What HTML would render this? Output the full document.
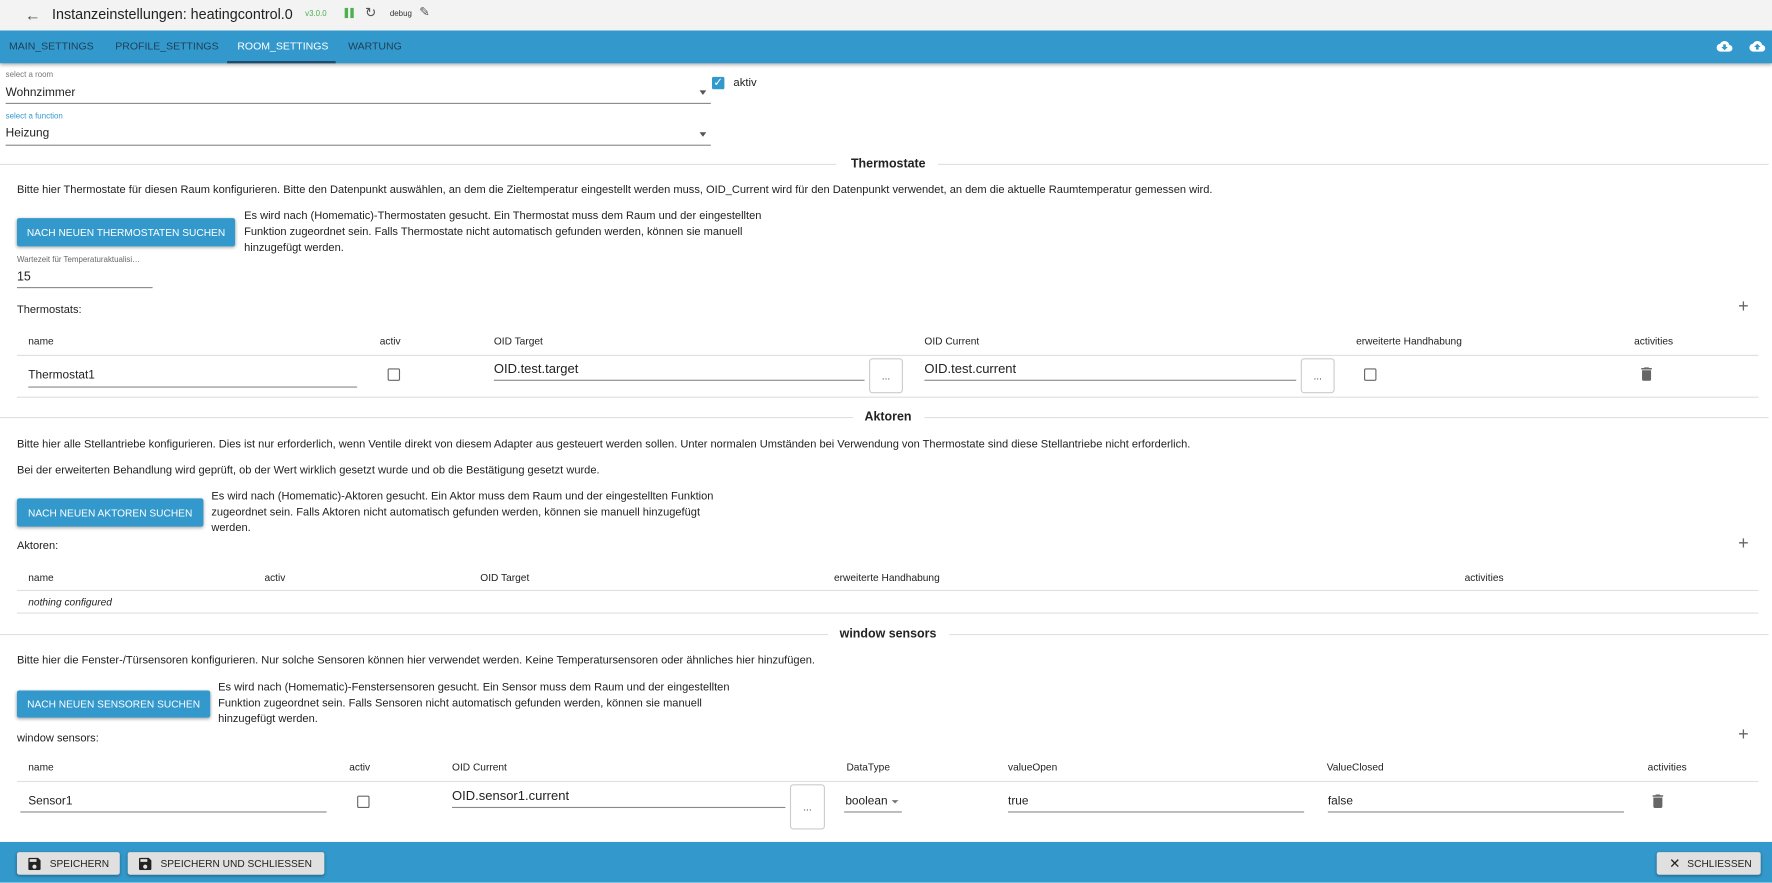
<!DOCTYPE html>
<html><head><meta charset="utf-8"><style>
html,body{margin:0;padding:0;width:1772px;height:883px;overflow:hidden;background:#fff}
#w{position:absolute;left:0;top:0;width:1568px;height:781.4px;transform:scale(1.13010);transform-origin:0 0;font-family:"Liberation Sans",sans-serif;color:#222;overflow:hidden}
.a{position:absolute;white-space:nowrap;line-height:14px;font-size:11px}
.l{position:absolute;height:1px;background:#e0e0e0}
.u{position:absolute;height:1px;background:#8a8a8a}
.btn{position:absolute;background:#3399cc;color:#fff;font-size:9px;white-space:nowrap;display:flex;align-items:center;justify-content:center;border-radius:2px;box-shadow:0 1px 3px rgba(0,0,0,.35)}
.cb{position:absolute;width:9px;height:9px;border:1.6px solid #666;border-radius:1.5px}
.dots{position:absolute;border:1px solid #ccc;border-radius:3px;font-size:9px;display:flex;align-items:center;justify-content:center;color:#444}
.h{position:absolute;font-size:11px;font-weight:bold;line-height:14px;white-space:nowrap}
.fb{position:absolute;background:#e0e0e0;border-radius:2px;font-size:9px;white-space:nowrap;display:flex;align-items:center;box-shadow:0 1px 3px rgba(0,0,0,.35);color:#222}
.desc{position:absolute;font-size:9.8px;line-height:14px;white-space:normal}
.p{font-size:9.8px}
.v{font-size:11.5px}
</style></head><body><div id="w">
<div style="position:absolute;left:0;top:0;width:1568px;height:27px;background:#f3f3f3"></div>
<div class="a" style="left:22px;top:5px;font-size:14px;color:#555;line-height:16px">←</div>
<div class="a" style="left:46px;top:5px;font-size:12.7px;line-height:16px;color:#222">Instanzeinstellungen: heatingcontrol.0</div>
<div class="a" style="left:270px;top:6px;font-size:7px;color:#4caf50">v3.0.0</div>
<div style="position:absolute;left:305px;top:7px;width:2.5px;height:9px;background:#4caf50"></div>
<div style="position:absolute;left:310px;top:7px;width:2.5px;height:9px;background:#4caf50"></div>
<div class="a" style="left:323px;top:4px;font-size:12px;color:#555">↻</div>
<div class="a" style="left:345px;top:6px;font-size:7px;color:#333">debug</div>
<div class="a" style="left:371px;top:4px;font-size:11px;color:#555">✎</div>
<div style="position:absolute;left:0;top:27px;width:1568px;height:29px;background:#3399cc;box-shadow:0 2px 3px rgba(0,0,0,.3)"></div>
<div class="a" style="left:8px;top:34px;font-size:9.3px;color:#1f3f55">MAIN_SETTINGS</div>
<div class="a" style="left:102px;top:34px;font-size:9.3px;color:#1f3f55">PROFILE_SETTINGS</div>
<div class="a" style="left:210px;top:34px;font-size:9.3px;color:#fff">ROOM_SETTINGS</div>
<div style="position:absolute;left:201px;top:54px;width:96px;height:2px;background:#1f4a6b"></div>
<div class="a" style="left:308px;top:34px;font-size:9.3px;color:#1f3f55">WARTUNG</div>
<svg style="position:absolute;left:1518px;top:34px" width="16" height="14" viewBox="0 0 24 24"><path fill="#fff" d="M19.35 10.04A7.49 7.49 0 0 0 12 4C9.11 4 6.6 5.64 5.350 8.04A5.994 5.994 0 0 0 0 14c0 3.31 2.690 6 6 6h13c2.76 0 5-2.24 5-5 0-2.64-2.05-4.78-4.65-4.96zM17 13l-5 5-5-5h3V9h4v4h3z"/></svg>
<svg style="position:absolute;left:1547px;top:34px" width="16" height="14" viewBox="0 0 24 24"><path fill="#fff" d="M19.35 10.04A7.49 7.49 0 0 0 12 4C9.11 4 6.6 5.64 5.35 8.04A5.994 5.994 0 0 0 0 14c0 3.31 2.69 6 6 6h13c2.76 0 5-2.24 5-5 0-2.64-2.05-4.78-4.65-4.96zM14 13v4h-4v-4H7l5-5 5 5h-3z"/></svg>
<div class="a" style="left:5px;top:60px;font-size:7px;color:#777">select a room</div>
<div class="a" style="left:5px;top:75px;font-size:10.5px">Wohnzimmer</div>
<div style="position:absolute;left:619px;top:80px;border:3.5px solid transparent;border-top:4px solid #555"></div>
<div class="u" style="left:5px;top:91px;width:624px"></div>
<div style="position:absolute;left:630px;top:68px;width:11px;height:11px;background:#3399cc;border-radius:1.5px;color:#fff;font-size:10px;line-height:11px;text-align:center">✓</div>
<div class="a" style="left:649px;top:67px;font-size:10px">aktiv</div>
<div class="a" style="left:5px;top:97px;font-size:7px;color:#3399cc">select a function</div>
<div class="a" style="left:5px;top:111px;font-size:10.5px">Heizung</div>
<div style="position:absolute;left:619px;top:117px;border:3.5px solid transparent;border-top:4px solid #555"></div>
<div class="u" style="left:5px;top:128px;width:624px"></div>
<div class="l" style="left:0;top:145px;width:740px"></div>
<div class="h" style="left:753px;top:138px">Thermostate</div>
<div class="l" style="left:830px;top:145px;width:735px"></div>
<div class="a p" style="left:15px;top:162px">Bitte hier Thermostate für diesen Raum konfigurieren. Bitte den Datenpunkt auswählen, an dem die Zieltemperatur eingestellt werden muss, OID_Current wird für den Datenpunkt verwendet, an dem die aktuelle Raumtemperatur gemessen wird.</div>
<div class="btn" style="left:15px;top:193px;width:193px;height:25px">NACH NEUEN THERMOSTATEN SUCHEN</div>
<div class="desc" style="left:216px;top:185px;width:480px">Es wird nach (Homematic)-Thermostaten gesucht. Ein Thermostat muss dem Raum und der eingestellten Funktion zugeordnet sein. Falls Thermostate nicht automatisch gefunden werden, können sie manuell hinzugefügt werden.</div>
<div class="a" style="left:15px;top:224px;font-size:7px;color:#666">Wartezeit für Temperaturaktualisi…</div>
<div class="a" style="left:15px;top:238px">15</div>
<div class="u" style="left:15px;top:254px;width:120px"></div>
<div class="a p" style="left:15px;top:268px">Thermostats:</div>
<div class="a" style="left:1538px;top:265px;font-size:16px;color:#666">+</div>
<div class="a" style="left:25px;top:295px;font-size:9px">name</div>
<div class="a" style="left:336px;top:295px;font-size:9px">activ</div>
<div class="a" style="left:437px;top:295px;font-size:9px">OID Target</div>
<div class="a" style="left:818px;top:295px;font-size:9px">OID Current</div>
<div class="a" style="left:1200px;top:295px;font-size:9px">erweiterte Handhabung</div>
<div class="a" style="left:1446px;top:295px;font-size:9px">activities</div>
<div class="l" style="left:15px;top:314px;width:1541px"></div>
<div class="a" style="left:25px;top:325px;font-size:10.5px">Thermostat1</div>
<div class="u" style="left:25px;top:342px;width:291px"></div>
<div class="cb" style="left:343px;top:326px"></div>
<div class="a v" style="left:437px;top:320px">OID.test.target</div>
<div class="u" style="left:437px;top:336px;width:328px"></div>
<div class="dots" style="left:769px;top:317px;width:28px;height:29px">...</div>
<div class="a v" style="left:818px;top:320px">OID.test.current</div>
<div class="u" style="left:818px;top:336px;width:329px"></div>
<div class="dots" style="left:1151px;top:317px;width:28px;height:29px">...</div>
<div class="cb" style="left:1207px;top:326px"></div>
<svg style="position:absolute;left:1452px;top:325px" width="10" height="12" viewBox="5 3 14 18"><path fill="#666" d="M6 19c0 1.1.9 2 2 2h8c1.1 0 2-.9 2-2V7H6v12zM19 4h-3.5l-1-1h-5l-1 1H5v2h14V4z"/></svg>
<div class="l" style="left:15px;top:351px;width:1541px"></div>
<div class="l" style="left:0;top:369px;width:755px"></div>
<div class="h" style="left:765px;top:362px">Aktoren</div>
<div class="l" style="left:818px;top:369px;width:747px"></div>
<div class="a p" style="left:15px;top:387px">Bitte hier alle Stellantriebe konfigurieren. Dies ist nur erforderlich, wenn Ventile direkt von diesem Adapter aus gesteuert werden sollen. Unter normalen Umständen bei Verwendung von Thermostate sind diese Stellantriebe nicht erforderlich.</div>
<div class="a p" style="left:15px;top:410px">Bei der erweiterten Behandlung wird geprüft, ob der Wert wirklich gesetzt wurde und ob die Bestätigung gesetzt wurde.</div>
<div class="btn" style="left:15px;top:441px;width:165px;height:25px">NACH NEUEN AKTOREN SUCHEN</div>
<div class="desc" style="left:187px;top:433px;width:460px">Es wird nach (Homematic)-Aktoren gesucht. Ein Aktor muss dem Raum und der eingestellten Funktion zugeordnet sein. Falls Aktoren nicht automatisch gefunden werden, können sie manuell hinzugefügt werden.</div>
<div class="a p" style="left:15px;top:477px">Aktoren:</div>
<div class="a" style="left:1538px;top:475px;font-size:16px;color:#666">+</div>
<div class="a" style="left:25px;top:504px;font-size:9px">name</div>
<div class="a" style="left:234px;top:504px;font-size:9px">activ</div>
<div class="a" style="left:425px;top:504px;font-size:9px">OID Target</div>
<div class="a" style="left:738px;top:504px;font-size:9px">erweiterte Handhabung</div>
<div class="a" style="left:1296px;top:504px;font-size:9px">activities</div>
<div class="l" style="left:15px;top:522px;width:1541px"></div>
<div class="a" style="left:25px;top:526px;font-size:9px;font-style:italic">nothing configured</div>
<div class="l" style="left:15px;top:542px;width:1541px"></div>
<div class="l" style="left:0;top:561px;width:733px"></div>
<div class="h" style="left:743px;top:554px">window sensors</div>
<div class="l" style="left:840px;top:561px;width:725px"></div>
<div class="a p" style="left:15px;top:578px">Bitte hier die Fenster-/Türsensoren konfigurieren. Nur solche Sensoren können hier verwendet werden. Keine Temperatursensoren oder ähnliches hier hinzufügen.</div>
<div class="btn" style="left:15px;top:611px;width:171px;height:24px">NACH NEUEN SENSOREN SUCHEN</div>
<div class="desc" style="left:193px;top:602px;width:470px">Es wird nach (Homematic)-Fenstersensoren gesucht. Ein Sensor muss dem Raum und der eingestellten Funktion zugeordnet sein. Falls Sensoren nicht automatisch gefunden werden, können sie manuell hinzugefügt werden.</div>
<div class="a p" style="left:15px;top:647px">window sensors:</div>
<div class="a" style="left:1538px;top:644px;font-size:16px;color:#666">+</div>
<div class="a" style="left:25px;top:672px;font-size:9px">name</div>
<div class="a" style="left:309px;top:672px;font-size:9px">activ</div>
<div class="a" style="left:400px;top:672px;font-size:9px">OID Current</div>
<div class="a" style="left:749px;top:672px;font-size:9px">DataType</div>
<div class="a" style="left:892px;top:672px;font-size:9px">valueOpen</div>
<div class="a" style="left:1174px;top:672px;font-size:9px">ValueClosed</div>
<div class="a" style="left:1458px;top:672px;font-size:9px">activities</div>
<div class="l" style="left:15px;top:691px;width:1541px"></div>
<div class="a" style="left:25px;top:702px;font-size:10.5px">Sensor1</div>
<div class="u" style="left:18px;top:718px;width:271px"></div>
<div class="cb" style="left:316px;top:704px"></div>
<div class="a v" style="left:400px;top:698px">OID.sensor1.current</div>
<div class="u" style="left:400px;top:714px;width:295px"></div>
<div class="dots" style="left:699px;top:694px;width:29px;height:38px">...</div>
<div class="a" style="left:748px;top:702px;font-size:10.5px">boolean</div>
<div style="position:absolute;left:789px;top:708px;border:3px solid transparent;border-top:3.5px solid #777"></div>
<div class="u" style="left:747px;top:718px;width:51px"></div>
<div class="a" style="left:892px;top:702px;font-size:10.5px">true</div>
<div class="u" style="left:892px;top:718px;width:262px"></div>
<div class="a" style="left:1175px;top:702px;font-size:10.5px">false</div>
<div class="u" style="left:1175px;top:718px;width:262px"></div>
<svg style="position:absolute;left:1462px;top:703px" width="10" height="12" viewBox="5 3 14 18"><path fill="#666" d="M6 19c0 1.1.9 2 2 2h8c1.1 0 2-.9 2-2V7H6v12zM19 4h-3.5l-1-1h-5l-1 1H5v2h14V4z"/></svg>
<div style="position:absolute;left:0;top:745px;width:1568px;height:37px;background:#3399cc"></div>
<div class="fb" style="left:15px;top:754px;width:91px;height:20px"><svg style="margin:0 8px 0 10px" width="11" height="11" viewBox="3 3 18 18"><path fill="#222" d="M17 3H5a2 2 0 0 0-2 2v14a2 2 0 0 0 2 2h14c1.1 0 2-.9 2-2V7l-4-4zm-5 16c-1.66 0-3-1.34-3-3s1.34-3 3-3 3 1.34 3 3-1.34 3-3 3zm3-10H5V5h10v4z"/></svg>SPEICHERN</div>
<div class="fb" style="left:113px;top:754px;width:174px;height:20px"><svg style="margin:0 8px 0 10px" width="11" height="11" viewBox="3 3 18 18"><path fill="#222" d="M17 3H5a2 2 0 0 0-2 2v14a2 2 0 0 0 2 2h14c1.1 0 2-.9 2-2V7l-4-4zm-5 16c-1.66 0-3-1.34-3-3s1.34-3 3-3 3 1.34 3 3-1.34 3-3 3zm3-10H5V5h10v4z"/></svg>SPEICHERN UND SCHLIESSEN</div>
<div class="fb" style="left:1466px;top:754px;width:92px;height:20px"><span style="margin:0 6px 0 11px;font-size:12px">✕</span>SCHLIESSEN</div>
</div></body></html>
